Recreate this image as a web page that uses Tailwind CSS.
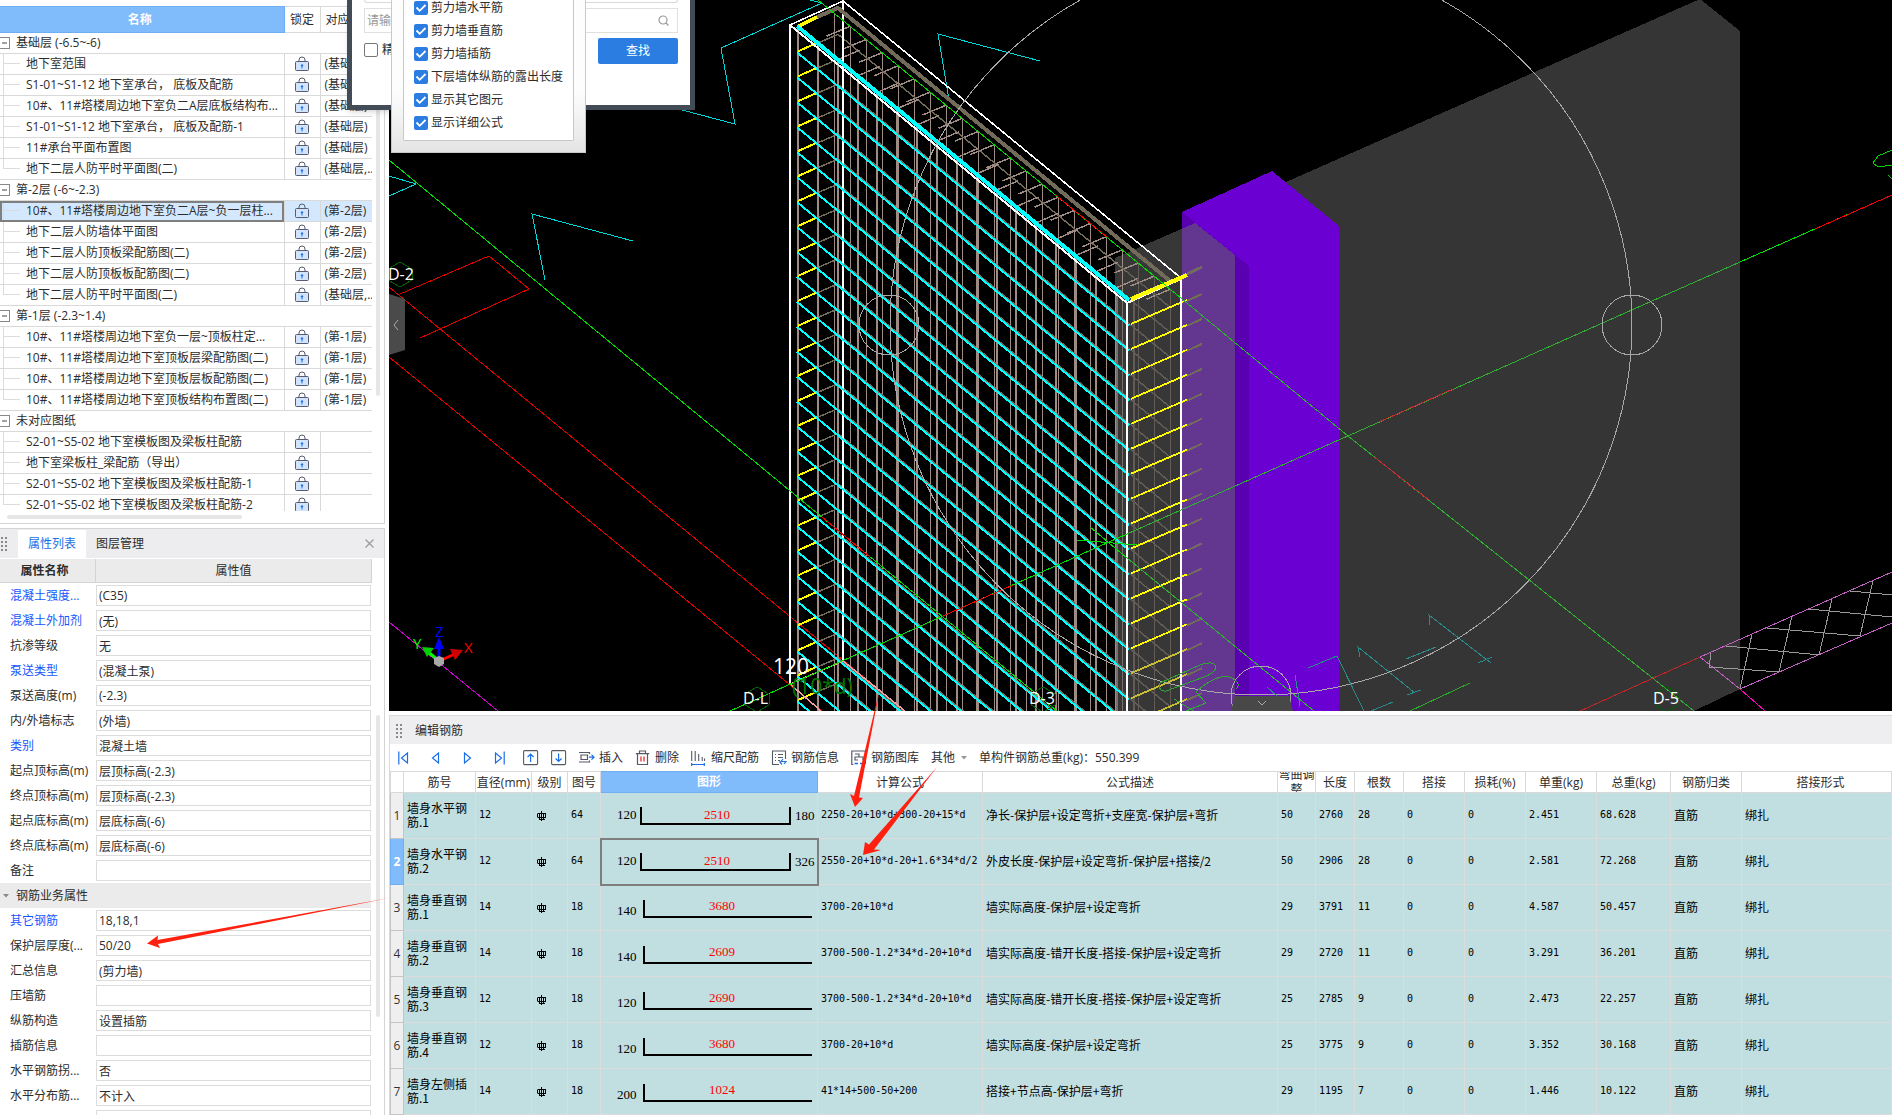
<!DOCTYPE html>
<html lang="zh-CN">
<head>
    <meta charset="UTF-8">
    <meta name="viewport" content="width=device-width, initial-scale=1.0">
    <title>编辑钢筋</title>
    <script src="https://cdn.jsdelivr.net/npm/@tailwindcss/browser@4"></script>
</head>
<body class="relative flex h-screen overflow-hidden bg-white font-['Open_Sans','Noto_Sans_CJK_SC',sans-serif] text-xs text-[#2c2c2c]">

    <!-- Left column -->
    <aside class="flex w-[385px] shrink-0 flex-col gap-1">
        <section class="relative flex-1 overflow-hidden border-r border-b border-[#d4d4d4] pt-[6px]">
            <div class="h-[505px] w-[372px] overflow-hidden">
                <table class="w-full table-fixed border-collapse">
                    <colgroup><col class="w-[284px]"><col class="w-[36px]"><col></colgroup>
                    <thead>
                        <tr class="h-[26px]">
                            <th class="border border-l-0 border-[#6faef0] bg-[#80bbfb] p-0 pr-1 font-bold text-white">名称</th>
                            <th class="border border-[#d9d9d9] p-0 font-normal">锁定</th>
                            <th class="border border-r-0 border-[#d9d9d9] p-0 pl-[5px] text-left font-normal whitespace-nowrap">对应楼层</th>
                        </tr>
                    </thead>
                    <tbody id="treeBody"></tbody>
                </table>
            </div>
            <div class="absolute top-[8px] right-[4px] h-[388px] w-1 rounded bg-[#e6e6e6]"></div>
            <div class="mt-1 ml-[7px] h-1 w-[235px] rounded bg-[#e6e6e6]"></div>
        </section>

        <section class="relative h-[587px] shrink-0 overflow-hidden border-t border-r border-[#d4d4d4]">
            <div class="flex h-[29px] items-center bg-[#ededef]">
                <svg class="h-4 w-[18px]" viewBox="0 0 18 16" fill="#8a8a8a"><path d="M1 1h2v2H1zM5 1h2v2H5zM1 5h2v2H1zM5 5h2v2H5zM1 9h2v2H1zM5 9h2v2H5zM1 13h2v2H1zM5 13h2v2H5z"/></svg>
                <button class="h-7 w-[68px] bg-white text-[#1a6fe6]">属性列表</button>
                <button class="h-7 w-[68px]">图层管理</button>
                <button class="mr-[10px] ml-auto" aria-label="关闭">
                    <svg class="size-[9px]" viewBox="0 0 9 9" stroke="#9a9a9a" stroke-width="1.2"><path d="M.5.5l8 8M8.500.5l-8 8"/></svg>
                </button>
            </div>
            <div class="mt-px flex h-[24px] w-[372px] border-r border-b border-[#d4d4d4] bg-[#ebebeb] text-center leading-6">
                <div class="w-[96px] border-r border-[#d4d4d4] pr-[6px] font-bold">属性名称</div>
                <div class="flex-1">属性值</div>
            </div>
            <div id="props"></div>
            <div class="absolute top-[186px] right-[4px] h-[302px] w-1 rounded bg-[#e6e6e6]"></div>
        </section>
    </aside>

    <!-- Right column -->
    <main class="ml-1 flex min-w-0 flex-1 flex-col gap-1">
        <div class="relative min-h-0 flex-1 overflow-hidden bg-black">
            <svg id="scene" class="h-full w-full" viewBox="389 0 1503 711" preserveAspectRatio="xMinYMin slice" fill="none"></svg>
        </div>

        <section class="h-[400px] shrink-0 overflow-hidden border-t border-l border-[#d9d9d9]">
            <div class="flex h-[28px] items-center gap-[11px] bg-[#eeeef0] pt-px pl-[6px]">
                <svg class="h-4 w-2" viewBox="0 0 8 16" fill="#8a8a8a"><path d="M0 1h2v2H0zM4 1h2v2H4zM0 5h2v2H0zM4 5h2v2H4zM0 9h2v2H0zM4 9h2v2H4zM0 13h2v2H0zM4 13h2v2H4z"/></svg>
                <span>编辑钢筋</span>
            </div>

            <div class="flex h-[27px] items-center gap-3 pt-px pl-2">
                <div class="mr-[6px] flex items-center gap-[21px]">
                    <button aria-label="首行"><svg class="h-[14px] w-[11px]" viewBox="0 0 11 14" fill="none" stroke="#1a6fe6" stroke-width="1.2"><path d="M.8 .5v13M9.500 2v10L3.500 7z"/></svg></button>
                    <button aria-label="上一行"><svg class="h-[14px] w-[11px]" viewBox="0 0 11 14" fill="none" stroke="#1a6fe6" stroke-width="1.2"><path d="M8.500 2v10L2.500 7z"/></svg></button>
                    <button aria-label="下一行"><svg class="h-[14px] w-[11px]" viewBox="0 0 11 14" fill="none" stroke="#1a6fe6" stroke-width="1.2"><path d="M2.500 2v10L8.500 7z"/></svg></button>
                    <button aria-label="末行"><svg class="h-[14px] w-[11px]" viewBox="0 0 11 14" fill="none" stroke="#1a6fe6" stroke-width="1.2"><path d="M1.500 2v10L7.500 7zM10.200 .5v13"/></svg></button>
                </div>
                <button aria-label="上移"><svg class="size-4" viewBox="0 0 16 16" fill="none"><rect x=".6" y=".6" width="14" height="14" rx="1" stroke="#555b66" stroke-width="1.1"/><path d="M7.600 12V4M4.600 7l3-3 3 3" stroke="#1a6fe6" stroke-width="1.2"/></svg></button>
                <button aria-label="下移"><svg class="size-4" viewBox="0 0 16 16" fill="none"><rect x=".6" y=".6" width="14" height="14" rx="1" stroke="#555b66" stroke-width="1.1"/><path d="M7.600 3.500v8M4.600 8.500l3 3 3-3" stroke="#1a6fe6" stroke-width="1.2"/></svg></button>
                <button class="flex items-center gap-1">
                    <svg class="size-4" viewBox="0 0 16 16" fill="none"><path d="M0 2.500h10.500V4M2 5h6.500v4.500H2zM0 12h10.500v-1.500" stroke="#555b66" stroke-width="1.2"/><path d="M10 7.200h5M12.500 4.700L15 7.200l-2.500 2.500" stroke="#1a6fe6" stroke-width="1.2"/></svg>
                    <span>插入</span>
                </button>
                <button class="flex items-center gap-1">
                    <svg class="size-4" viewBox="0 0 16 16" fill="none"><path d="M.8 3.600h13.400M4.500 3.500V1h6v2.500M2.500 4v10.500h10V4" stroke="#555b66" stroke-width="1.2"/><path d="M6 6.500v5M9 6.500v5" stroke="#e02020" stroke-width="1.2"/></svg>
                    <span>删除</span>
                </button>
                <button class="flex items-center gap-1">
                    <svg class="size-4" viewBox="0 0 16 16" fill="none"><path d="M.7 1v10M4.200 1v10M7.700 4v7M11.200 7v4M13.500 8.500V11" stroke="#555b66" stroke-width="1.1"/><path d="M.7 13v3M13.300 13v3M.7 14.500h12.600" stroke="#1a6fe6" stroke-width="1.2"/></svg>
                    <span>缩尺配筋</span>
                </button>
                <button class="flex items-center gap-1">
                    <svg class="size-4" viewBox="0 0 16 16" fill="none"><path d="M8 14.500H1.500V1h13v8M4 4.500h1M7 4.500h5M4 7.500h1M7 7.500h5M4 10.500h1M7 10.500h2" stroke="#555b66" stroke-width="1.1"/><path d="M12 9l-2 2.500h5L13 14M8.500 11.500l2.500 3" stroke="#1a6fe6" stroke-width="1.2"/></svg>
                    <span>钢筋信息</span>
                </button>
                <button class="flex items-center gap-1">
                    <svg class="size-4" viewBox="0 0 16 16" fill="none"><path d="M14.400 14V1H.8v13.500h1.500M4 4h4v3H4v3h3M8 7h4v3.500" stroke="#555b66" stroke-width="1.2"/><path d="M3.500 13.500H7M9 13.500h3.500" stroke="#1a6fe6" stroke-width="1.300"/></svg>
                    <span>钢筋图库</span>
                </button>
                <button class="flex items-center gap-[6px]">
                    <span>其他</span>
                    <svg class="h-1 w-[6px]" viewBox="0 0 6 4" fill="#999"><path d="M0 0h6L3 3.500z"/></svg>
                </button>
                <span class="whitespace-nowrap">单构件钢筋总重(kg)：550.399</span>
            </div>

            <table class="w-full table-fixed border-collapse">
                <colgroup>
                    <col class="w-[13px]"><col class="w-[72px]"><col class="w-[56px]"><col class="w-[36px]"><col class="w-[33px]"><col class="w-[217px]">
                    <col class="w-[165px]"><col class="w-[295px]"><col class="w-[38px]"><col class="w-[39px]"><col class="w-[49px]"><col class="w-[61px]">
                    <col class="w-[61px]"><col class="w-[71px]"><col class="w-[74px]"><col class="w-[71px]"><col>
                </colgroup>
                <thead>
                    <tr id="rebarHead"></tr>
                </thead>
                <tbody id="rebarBody" class="bg-[#c1dee0] font-['Noto_Sans_CJK_SC',sans-serif] text-black"></tbody>
            </table>
        </section>
    </main>

    <!-- Find dialog -->
    <div class="absolute top-0 left-[347px] h-[110px] w-[348px] border-5 border-t-0 border-[#434c56] bg-white shadow-md">
        <div class="mx-3 h-[3px] rounded-b border border-t-0 border-[#d9d9d9]"></div>
        <div class="mx-3 mt-[5px] flex h-[25px] items-center border border-[#e0e0e0] pr-2 pl-[2px]">
            <input class="min-w-0 flex-1 outline-none placeholder:text-[#999]" type="text" placeholder="请输入" aria-label="查找内容">
            <svg class="size-[11px]" viewBox="0 0 11 11" fill="none" stroke="#999" stroke-width="1.2"><circle cx="5" cy="5" r="4"/><path d="M8 8l2.500 2.500"/></svg>
        </div>
        <div class="mx-3 mt-[5px] flex items-start justify-between">
            <label class="mt-[4px] flex items-center gap-1"><input type="checkbox" class="size-[14px] appearance-none rounded-xs border border-[#777]">精确查找</label>
            <button class="h-[26px] w-20 rounded-xs bg-[#2b7de1] text-white">查找</button>
        </div>
    </div>

    <!-- Display options -->
    <div class="absolute top-0 left-[391px] h-[153px] w-[195px] border border-t-0 border-[#c8c8c8] bg-linear-to-b from-[#fdfdfd] from-60% to-[#e4e4e4] pl-[11px]">
        <div id="options" class="flex h-[141px] w-[171px] flex-col gap-[9px] rounded-b-xs border border-t-0 border-[#c8c8c8] bg-white pt-px pl-[10px]"></div>
    </div>

    <!-- Annotation arrows -->
    <svg class="pointer-events-none absolute top-0 left-0 h-[1115px] w-[1892px]" viewBox="0 0 1892 1115" fill="#ff2010">
        <path d="M147 943.500L158 935.500L157.500 940L389 898L158 944L160 948z"/>
        <path d="M855 807L850 794L854 796L880 688L859 797.500L863 798z"/>
        <path d="M863 855L865 842L869 844.500L937 767L874 849.500L881 850z"/>
    </svg>

    <script>
        const lockIcon = `<svg class="mx-auto h-4 w-[14px]" viewBox="0 0 14 16" fill="none"><path d="M4 6V4a3 3 0 0 1 6 0v2" stroke="#555b70" stroke-width="1"/><rect x=".5" y="5.500" width="13" height="9" rx="1" fill="#d2e4fb" stroke="#555b70" stroke-width="1"/><path d="M7 8l1.500 1.600-1 .8v2h-1v-2l-1-.8z" fill="#1a6fe6"/></svg>`;

        const tree = [
            { name: '基础层 (-6.5~-6)', rows: [
                ['地下室范围', '(基础层)'],
                ['S1-01~S1-12 地下室承台， 底板及配筋', '(基础层)'],
                ['10#、11#塔楼周边地下室负二A层底板结构布...', '(基础层)'],
                ['S1-01~S1-12 地下室承台， 底板及配筋-1', '(基础层)'],
                ['11#承台平面布置图', '(基础层)'],
                ['地下二层人防平时平面图(二)', '(基础层,..'],
            ] },
            { name: '第-2层 (-6~-2.3)', rows: [
                ['10#、11#塔楼周边地下室负二A层~负一层柱...', '(第-2层)', true],
                ['地下二层人防墙体平面图', '(第-2层)'],
                ['地下二层人防顶板梁配筋图(二)', '(第-2层)'],
                ['地下二层人防顶板板配筋图(二)', '(第-2层)'],
                ['地下二层人防平时平面图(二)', '(基础层,..'],
            ] },
            { name: '第-1层 (-2.3~1.4)', rows: [
                ['10#、11#塔楼周边地下室负一层~顶板柱定...', '(第-1层)'],
                ['10#、11#塔楼周边地下室顶板层梁配筋图(二)', '(第-1层)'],
                ['10#、11#塔楼周边地下室顶板层板配筋图(二)', '(第-1层)'],
                ['10#、11#塔楼周边地下室顶板结构布置图(二)', '(第-1层)'],
            ] },
            { name: '未对应图纸', rows: [
                ['S2-01~S5-02 地下室模板图及梁板柱配筋', ''],
                ['地下室梁板柱_梁配筋（导出）', ''],
                ['S2-01~S5-02 地下室模板图及梁板柱配筋-1', ''],
                ['S2-01~S5-02 地下室模板图及梁板柱配筋-2', ''],
            ] },
        ];

        document.getElementById('treeBody').innerHTML = tree.map(group => `
            <tr class="h-[21px] border-b border-[#d9d9d9]">
                <td colspan="3" class="p-0">
                    <div class="flex items-center gap-[6px]">
                        <button class="-ml-px h-[12px] w-[11px] border border-[#888]" aria-label="折叠"><svg class="h-[10px] w-[9px]" viewBox="0 0 9 10"><path d="M2 5h5" stroke="#444"/></svg></button>${group.name}
                    </div>
                </td>
            </tr>` + group.rows.map(([name, floor, selected], i) => `
            <tr class="h-[21px] border-b border-[#d9d9d9] ${selected ? 'bg-[#d4e8fd]' : ''}">
                <td class="p-0 whitespace-nowrap ${selected ? 'outline-2 -outline-offset-2 outline-[#7f7f7f]' : ''}">
                    <div class="flex h-5 items-center gap-[6px]">
                        <svg class="h-5 w-5 shrink-0" viewBox="0 0 20 20" stroke="#dcdcdc"><path d="M3.500 0V${i === group.rows.length - 1 ? 10 : 20}M4 9.500h16"/></svg>${name}
                    </div>
                </td>
                <td class="border-x border-[#d9d9d9] p-0">${lockIcon}</td>
                <td class="p-0 pl-1 whitespace-nowrap">${floor}</td>
            </tr>`).join('')).join('');

        const props = [
            ['混凝土强度...', '(C35)', 1], ['混凝土外加剂', '(无)', 1], ['抗渗等级', '无'], ['泵送类型', '(混凝土泵)', 1],
            ['泵送高度(m)', '(-2.3)'], ['内/外墙标志', '(外墙)'], ['类别', '混凝土墙', 1], ['起点顶标高(m)', '层顶标高(-2.3)'],
            ['终点顶标高(m)', '层顶标高(-2.3)'], ['起点底标高(m)', '层底标高(-6)'], ['终点底标高(m)', '层底标高(-6)'], ['备注', ''],
            ['钢筋业务属性'],
            ['其它钢筋', '18,18,1', 1], ['保护层厚度(...', '50/20'], ['汇总信息', '(剪力墙)'], ['压墙筋', ''], ['纵筋构造', '设置插筋'],
            ['插筋信息', ''], ['水平钢筋拐...', '否'], ['水平分布筋...', '不计入'], ['', ''],
        ];

        document.getElementById('props').innerHTML = props.map(([name, value, link], i) => value === undefined ? `
            <div class="flex h-[25px] w-[371px] items-center gap-[7px] bg-[#ebebeb] pl-[3px]">
                <svg class="h-1 w-[6px]" viewBox="0 0 6 4" fill="#888"><path d="M0 0h6L3 3.500z"/></svg>${name}
            </div>` : `
            <div class="flex h-[25px] w-[371px] items-center">
                <label for="prop${i}" class="w-[96px] pl-[10px] whitespace-nowrap ${link ? 'text-[#1557ff]' : ''}">${name}</label>
                <input id="prop${i}" type="text" value="${value}" class="h-[21px] min-w-0 flex-1 border border-[#dcdcdc] px-[2px] outline-none">
            </div>`).join('');

        document.getElementById('options').innerHTML = ['剪力墙水平筋', '剪力墙垂直筋', '剪力墙插筋', '下层墙体纵筋的露出长度', '显示其它图元', '显示详细公式'].map(text => `
            <label class="flex h-[14px] items-center gap-[3px] whitespace-nowrap">
                <span class="relative size-[14px]">
                    <input type="checkbox" checked class="block size-[14px] appearance-none rounded-xs bg-[#2b7de1]">
                    <svg class="pointer-events-none absolute inset-0 size-[14px]" viewBox="0 0 14 14" fill="none" stroke="#fff" stroke-width="1.800"><path d="M2.500 6.500l3.200 3.300L11.500 4"/></svg>
                </span>${text}
            </label>`).join('');

        // Rebar table
        const heads = ['', '筋号', '直径(mm)', '级别', '图号', '图形', '计算公式', '公式描述', '弯曲调整', '长度', '根数', '搭接', '损耗(%)', '单重(kg)', '总重(kg)', '钢筋归类', '搭接形式'];
        document.getElementById('rebarHead').innerHTML = heads.map(h => h === '图形'
            ? `<th class="border border-[#6faef0] bg-[#80bbfb] p-0 font-bold text-white">${h}</th>`
            : `<th class="border border-[#d9d9d9] p-0 font-normal last:pl-2"><div class="flex h-5 items-center justify-center overflow-hidden leading-[15px]">${h}</div></th>`).join('');

        const gradeIcon = `<svg class="size-[10px]" viewBox="0 0 10 10" fill="none" stroke="#000"><path d="M4.500 0v10M.5 2.500v4M8.500 2.500v4M1 2.500h8M1 6.500h8M2.500 2.500v6M6.500 2.500v6M2 8.500h6"/></svg>`;

        const rebars = [
            ['墙身水平钢', '筋.1', 12, 64, 120, 2510, 180, '2250-20+10*d+300-20+15*d', '净长-保护层+设定弯折+支座宽-保护层+弯折', 50, 2760, 28, '2.451', '68.628'],
            ['墙身水平钢', '筋.2', 12, 64, 120, 2510, 326, '2550-20+10*d-20+1.6*34*d/2', '外皮长度-保护层+设定弯折-保护层+搭接/2', 50, 2906, 28, '2.581', '72.268'],
            ['墙身垂直钢', '筋.1', 14, 18, 140, 3680, 0, '3700-20+10*d', '墙实际高度-保护层+设定弯折', 29, 3791, 11, '4.587', '50.457'],
            ['墙身垂直钢', '筋.2', 14, 18, 140, 2609, 0, '3700-500-1.2*34*d-20+10*d', '墙实际高度-错开长度-搭接-保护层+设定弯折', 29, 2720, 11, '3.291', '36.201'],
            ['墙身垂直钢', '筋.3', 12, 18, 120, 2690, 0, '3700-500-1.2*34*d-20+10*d', '墙实际高度-错开长度-搭接-保护层+设定弯折', 25, 2785, 9, '2.473', '22.257'],
            ['墙身垂直钢', '筋.4', 12, 18, 120, 3680, 0, '3700-20+10*d', '墙实际高度-保护层+设定弯折', 25, 3775, 9, '3.352', '30.168'],
            ['墙身左侧插', '筋.1', 14, 18, 200, 1024, 0, '41*14+500-50+200', '搭接+节点高-保护层+弯折', 29, 1195, 7, '1.446', '10.122'],
        ];

        function shape(left, length, right) {
            if (right) {
                return `<text x="16" y="26">${left}</text><text x="194" y="27">${right}</text><text x="116" y="26" text-anchor="middle" fill="#f00">${length}</text><path d="M40 14v17h149V14" fill="none" stroke="#000" stroke-width="2"/>`;
            }
            return `<text x="16" y="30">${left}</text><text x="121" y="25" text-anchor="middle" fill="#f00">${length}</text><path d="M43 15v17h168" fill="none" stroke="#000" stroke-width="2"/>`;
        }

        const num = v => `<td class="border border-[#dcdcdc] p-0 pb-px pl-[3px] font-['DejaVu_Sans_Mono',monospace] text-[10px] whitespace-nowrap">${v}</td>`;
        const txt = v => `<td class="border border-[#dcdcdc] p-0 pb-[2px] pl-[3px] leading-[14px] whitespace-nowrap">${v}</td>`;

        document.getElementById('rebarBody').innerHTML = rebars.map((r, i) => `
            <tr class="h-[46px]">
                <th class="border p-0 font-['Open_Sans',sans-serif] ${i === 1 ? 'border-[#6faef0] bg-[#80bbfb] font-bold text-white' : 'border-[#c4c4c4] bg-[#efefef] font-normal text-[#333]'}">${i + 1}</th>
                ${txt(r[0] + '<br>' + r[1])}${num(r[2])}
                <td class="border border-[#dcdcdc] p-0 pl-[5px]">${gradeIcon}</td>
                ${num(r[3])}
                <td class="border border-[#dcdcdc] p-0 ${i === 1 ? 'outline-2 -outline-offset-1 outline-[#7f7f7f]' : ''}"><svg class="block h-[45px] w-[216px] font-['Liberation_Serif',serif] text-[13px]" viewBox="0 0 216 45">${shape(r[4], r[5], r[6])}</svg></td>
                ${num(r[7])}${txt(r[8])}${num(r[9])}${num(r[10])}${num(r[11])}${num(0)}${num(0)}${num(r[12])}${num(r[13])}${txt('直筋')}${txt('绑扎')}
            </tr>`).join('');

        // 3D view
        const line = (x1, y1, x2, y2, color, width = 1) => `<path d="M${x1} ${y1}L${x2} ${y2}" stroke="${color}" stroke-width="${width}"/>`;
        const poly = (points, color, width = 1) => `<polyline points="${points}" stroke="${color}" stroke-width="${width}"/>`;
        const fill = (points, color, opacity = 1) => `<polygon points="${points}" fill="${color}" fill-opacity="${opacity}"/>`;
        const K = 0.822;
        const olive = '#736b5a', bar = '#9d8b84', cyan = '#00ffff', green = '#00e000', dimGreen = '#30b030';
        let s = '<g shape-rendering="crispEdges">';

        // solids
        s += fill('1286,182 1700,-1 1740,31 1740,689 1694,711 1235,711 1235,204', '#353535');
        s += fill('1182,212 1272,171 1339,226 1339,711 1182,711', '#6a00d2');
        s += fill('1182,212 1249,266 1249,711 1182,711', '#5900b0');
        s += fill('1115,258 1195,223 1235,255 1235,711 1115,711', '#6e6e6e', 0.5);

        // drawing lines on the ground
        s += poly('389,287 905,711', '#e00000') + poly('389,357 822,711', '#e00000');
        s += poly('400,294 489,256 529,289 420,338', '#e00000');
        s += poly('389,622 498,711', '#d000d0');
        s += poly('389,176 416,184 389,196', '#00d8d8');
        s += poly('545,280 532,214 633,241', '#00d8d8');
        s += poly('682,110 735,124 721,48 822,3 810,0', '#00d8d8');
        s += poly('949,100 938,34 1040,61', '#00d8d8');

        // reinforcement: back layer, then front layer
        for (let k = 0; k < 22; k++) {
            const x = 834.5 + 16 * k;
            const y = 13 + (x - 834.5) * K;
            s += line(x, y, x, 711, x > 1127 ? '#625c57' : bar, 1.6);
            if (k) s += line(x, y, x - 24, y + 10, bar, 1.5);
        }
        for (let k = 1; k < 28; k++) {
            const y = 27.400 + 24.950 * k;
            s += poly(`817,${y - 9} 838,${y - 18} 1127,${y - 18 + 289 * K}`, olive, 1.5);
            s += line(1127, y - 18 + 289 * K, 1170, y - 18 + 332 * K, '#625c57', 1.5);
        }
        for (let k = 0; k < 17; k++) {
            const x = 798 + 19.850 * k;
            const y = 27 + (x - 798) * K;
            s += line(x, y, x, 711, bar, 2);
            if (k > 1) s += line(x, y, x + 22, y - 9.500, bar, 1.5);
        }
        s += line(1117, 290, 1117, 711, '#77706c', 2) + line(1122, 294, 1122, 711, '#77706c', 1) + line(1134, 300, 1134, 711, '#625c57', 2);
        s += poly('843,661 843,2', '#fff', 2);
        for (let k = 1; k < 28; k++) {
            const y = 27.400 + 24.950 * k;
            s += line(797, y, 1129, y + 273, cyan, 2);
            s += line(798, y - 1, 816, y - 9, '#ffff00', 2);
        }
        for (let k = 1; k < 18; k++) {
            const y = 300 + 24.950 * k;
            s += line(1187, y - 24, 1202, y - 31, olive, 2);
            s += line(1131, y - 1, 1187, y - 25, k > 14 ? '#c8c030' : '#ffff00', 1.8);
        }

        // top rails and wall outline
        s += poly('817,17 838,8 1170,281', olive, 4);
        s += line(1187, 274, 1202, 267, olive, 3);
        s += poly('790,684 790,25 843,1 1181,278 1181,711', '#fff', 1.6);
        s += poly('790,25 1127,303 1127,711', '#fff', 2) + line(1127, 303, 1181, 279, '#fff', 2);
        s += poly('821,711 790,684 843,661 905,711', '#f0a0a0', 1.5);
        s += line(797, 26, 1129, 300, cyan, 4);
        s += line(799, 26, 817, 17, '#ffff00', 4) + line(1131, 299, 1187, 275, '#ffff00', 4);

        // axes
        s += line(818, 0, 1182, 299, green) + line(1182, 299, 1348, 436, dimGreen) + line(1348, 436, 1694, 711, dimGreen);
        s += line(1055, 194.500, 1108, 238, '#ff0000') + line(1373, 456, 1429, 500, '#c03030');
        s += line(730, 711, 1127, 534, green) + line(1127, 534, 1740, 262, dimGreen) + line(1740, 262, 1892, 195, green);
        s += line(943, 616, 1013, 585, '#ff0000') + line(1379, 422, 1453, 389, '#c03030') + line(1815, 229, 1892, 195, '#ff0000');
        s += line(389, 160, 1057, 711, green) + line(822, 517, 870, 557, '#ff0000');
        s += line(1090, 527, 1127, 558, green) + line(1127, 558, 1314, 711, dimGreen) + line(1077, 540, 1137, 545, green);

        // orbit rings
        s += '<g stroke="#a8a8a8"><circle cx="1261" cy="324" r="371"/><circle cx="889" cy="325" r="30"/><circle cx="1632" cy="325" r="30"/><circle cx="1261" cy="696" r="30"/></g>';

        // hatch strip and marks at the lower right
        s += line(1580, 711, 1700, 657, '#c02828') + line(1740, 689, 1765, 711, '#ff00c0');
        s += poly('1892,572 1700,657 1740,689 1892,623', '#c060c0');
        s += '<path stroke="#9a9a9a" d="M1709 667l71 5M1726 646l94 9M1767 628l93 8M1808 609l84 8M1850 591l42 4M1740 689l12-55M1779 672l13-56M1819 655l13-56M1860 636l13-55M1709 667l2-14"/>';
        s += '<path stroke="#2a8a8c" d="M1430 625l-1-10 62 48M1478 663l14-6M1360 657l-2-10 57 46M1407 695l14-5M1406 659l30-12M1308 668l29-12 27 55M1371 711l22-9M1295 675l5 31M1267 687l10 9"/>';
        s += '<path stroke="#2fa82f" d="M1410 711l60-28M1160 683l40-18q14-5 16 2-1 6-12 10l-38 14q-8 1-6-8zM1174 699l20 12M1196 692q22-20 36-14 10 6 4 11M1196 692l10 11-20 8"/>';
        s += '<path stroke="#00d000" d="M1892 150l-14 6-5 7 5 4 14-2M1888 175l4 4"/>';

        // labels
        const hexagon = (x, y) => `<path stroke="#005f00" d="M${x - 12} ${y - 5}l12-7 12 7v11l-12 7-12-7z"/>`;
        s += hexagon(400, 274) + hexagon(757, 699) + hexagon(1043, 699) + hexagon(1667, 699) + '</g>';
        s += '<g fill="#fff" font-size="16"><text x="388" y="280">D-2</text><text x="743" y="704">D-L</text><text x="1029" y="704">D-3</text><text x="1653" y="704">D-5</text></g>';
        s += '<text x="773" y="674" font-size="21" fill="#fff">120</text><text x="792" y="694" font-size="21" fill="#007800">(10*d)</text>';

        // axis gizmo
        s += line(439, 661, 427, 651, '#00ff00', 3) + fill('422,647 434,648 427,657', '#00d000');
        s += line(439, 661, 455, 654, '#ff0000', 3) + fill('463,650 450,649 455,660', '#d00000');
        s += line(439, 660, 439, 645, '#0000ff', 3) + fill('439,637 434,649 444,649', '#0000ff');
        s += fill('434,658 439,656 444,658 444,664 439,667 434,664', '#a8a8a8');
        s += '<g font-size="15"><text x="413" y="649" fill="#00ff00">Y</text><text x="435" y="637" fill="#0000ff">Z</text><text x="464" y="653" fill="#ff0000">X</text></g>';

        // panel handles
        s += fill('389,294 405,299 405,350 389,355', '#4a4a4a') + poly('398,320 394,325 398,330', '#aaa');
        s += fill('1235,696 1289,696 1293,711 1231,711', '#484848') + poly('1258,701 1262,705 1266,701', '#aaa');

        document.getElementById('scene').innerHTML = s;
    </script>
</body>
</html>
